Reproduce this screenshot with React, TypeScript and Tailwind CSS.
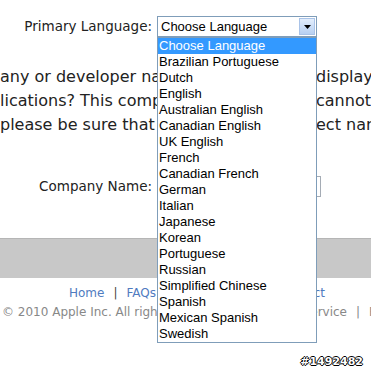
const languages = [
  'Choose Language',
  'Brazilian Portuguese',
  'Dutch',
  'English',
  'Australian English',
  'Canadian English',
  'UK English',
  'French',
  'Canadian French',
  'German',
  'Italian',
  'Japanese',
  'Korean',
  'Portuguese',
  'Russian',
  'Simplified Chinese',
  'Spanish',
  'Mexican Spanish',
  'Swedish',
];

function LanguageSelect() {
  return (
    <div className="relative ml-[5px] w-[160px] h-[21px]">
      <div className="flex items-center h-full border border-[#7f9db9] bg-white font-['Liberation_Sans',Arial,sans-serif] text-[13px] text-black">
        <span className="flex-1 pl-[3px] leading-none">Choose Language</span>
        <span className="mr-[1px] flex items-center justify-center w-[16px] h-[17px] border border-[#a9c3e8] bg-gradient-to-b from-[#e3eefc] to-[#b7d0f2]">
          <svg width="7" height="4" viewBox="0 0 7 4">
            <path d="M0 0H7L3.5 4Z" fill="#000" />
          </svg>
        </span>
      </div>
      {/* open list of the select */}
      <ul className="absolute left-0 top-full z-10 w-[160px] border border-[#7f9db9] bg-white font-['Liberation_Sans',Arial,sans-serif] text-[13px] text-black">
        {languages.map((lang, i) => (
          <li
            key={lang}
            className={`h-[16px] leading-[16px] pl-[1px] whitespace-nowrap ${i === 0 ? 'bg-[#3399ff] text-white' : ''}`}
          >
            {lang}
          </li>
        ))}
      </ul>
    </div>
  );
}

export default function App() {
  return (
    <div className="relative w-[371px] h-[372px] overflow-hidden bg-white font-['DejaVu_Sans',Verdana,sans-serif] text-[#222]">
      <div className="flex items-center h-[21px] mt-[16px]">
        <label className="w-[152px] shrink-0 text-right text-[13.5px]">Primary Language:</label>
        <LanguageSelect />
      </div>

      <div className="mt-[28px] text-[16px] leading-[24px]">
        <div className="flex whitespace-nowrap">
          <span className="w-[316px] shrink-0 overflow-hidden">any or developer name would you like to</span>
          <span className="shrink-0">display with your</span>
        </div>
        <div className="flex whitespace-nowrap">
          <span className="w-[316px] shrink-0 overflow-hidden">lications? This company name</span>
          <span className="shrink-0">cannot be changed</span>
        </div>
        <div className="flex whitespace-nowrap">
          <span className="w-[316px] shrink-0 overflow-hidden">please be sure that you enter the</span>
          <span className="shrink-0">ect name.</span>
        </div>
      </div>

      <div className="flex items-center h-[21px] mt-[39px]">
        <label className="w-[152px] shrink-0 text-right text-[13.5px]">Company Name:</label>
        <input className="ml-[5px] w-[164px] h-[21px] border border-[#a5acb5] bg-white outline-none" />
      </div>

      <div className="mt-[41px] h-[40px] bg-[#c8c8c8] border-t border-[#b5b5b5]" />

      <div className="mt-[6px] text-[12px] leading-[19px] whitespace-nowrap">
        <div className="flex pl-[69px] pr-[46px]">
          <a className="text-[#4f7bbf]">Home</a>
          <span className="mx-[9px] text-[#444]">|</span>
          <a className="text-[#4f7bbf]">FAQs</a>
          <span className="flex-1" />
          <a className="text-[#4f7bbf]">Contact</a>
        </div>
        <div className="flex text-[#888]">
          <span className="w-[240px] shrink-0 pl-[2px]">© 2010 Apple Inc. All rights reserved.</span>
          <span className="flex justify-end w-[107px] shrink-0">
            <a className="shrink-0">Terms of Service</a>
          </span>
          <span className="mx-[9px] shrink-0">|</span>
          <a className="shrink-0">Privacy Policy</a>
        </div>
      </div>

      <div className="flex justify-end pr-[8px] mt-[34px]">
        <span className="font-['DejaVu_Sans',sans-serif] font-bold text-[11px] leading-[12px] text-white [text-shadow:1px_0_0_#000,-1px_0_0_#000,0_1px_0_#000,0_-1px_0_#000]">
          #1492482
        </span>
      </div>
    </div>
  );
}
